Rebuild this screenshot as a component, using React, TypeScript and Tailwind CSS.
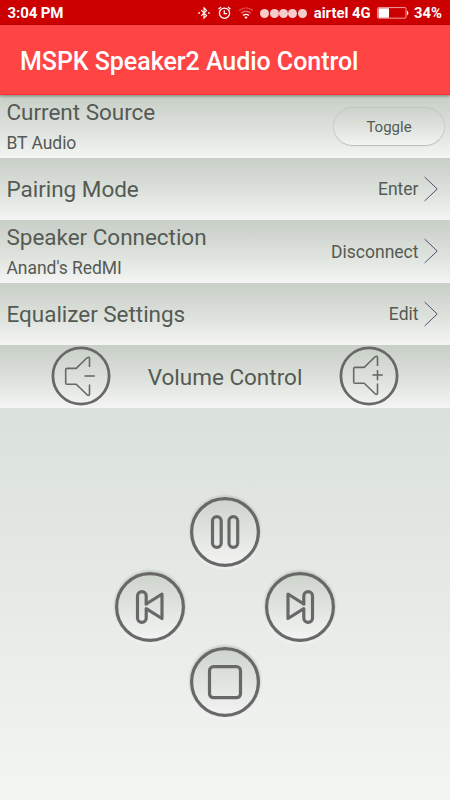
import type { ReactNode } from "react";

interface SettingRowProps {
  title: string;
  subtitle?: string;
  children: ReactNode;
}

const ROW =
  "h-[62.5px] bg-linear-to-b from-[#c8cfc7] via-[#dbe0da] to-[#f4f5f4]";

function SettingRow({ title, subtitle, children }: SettingRowProps) {
  return (
    <div className={`${ROW} flex items-center justify-between pl-[6.5px]`}>
      <div className="flex flex-col gap-[5px] pt-[2px] whitespace-nowrap">
        <span className="text-[22.5px] leading-[27px] tracking-[-0.03px]">{title}</span>
        {subtitle && (
          <span className="text-[17.5px] leading-[24px] tracking-[-0.05px]">{subtitle}</span>
        )}
      </div>
      {children}
    </div>
  );
}

function RowLink({ label }: { label: string }) {
  return (
    <button className="flex items-center gap-[5.5px] pr-3 text-[17.5px]">
      <span className="pt-px">{label}</span>
      <svg width="14" height="26" viewBox="0 0 14 26" fill="none">
        <path d="M.6 1l12.6 12L.6 25" stroke="#50516f" strokeWidth="1" />
      </svg>
    </button>
  );
}

function VolumeIcon({ plus }: { plus?: boolean }) {
  return (
    <svg width="60" height="60" viewBox="0 0 60 60" fill="none" stroke="#686868">
      <circle cx="30" cy="30" r="28.1" strokeWidth="2.8" />
      <g
        strokeWidth="1.6"
        strokeLinejoin="round"
        transform={plus ? "translate(0 -1)" : undefined}
      >
        <path d="M38.5 21v-8.2q0-2.6-2.4-1L25.2 22.4H16q-1.3 0-1.3 1.3v13.2q0 1.3 1.3 1.3h9.2l10.9 10.6q2.4 1.6 2.4-1v-9.4" />
        <path d="M33.5 30h10.3" />
        {plus && <path d="M38.5 25v10.3" />}
      </g>
    </svg>
  );
}

function MediaButton({ label, children }: { label: string; children: ReactNode }) {
  return (
    <button
      aria-label={label}
      className="size-[70px] rounded-full bg-linear-to-b from-[#ccd3cb] to-[#f4f5f4] shadow-[0_-1px_2px_1px_#c8d0c7,0_1px_2px_1px_#f5f6f5]"
    >
      <svg
        width="70"
        height="70"
        viewBox="0 0 70 70"
        fill="none"
        stroke="#686868"
        strokeWidth="3.2"
        strokeLinejoin="round"
      >
        <circle cx="35" cy="35" r="33.4" />
        {children}
      </svg>
    </button>
  );
}

function StatusBar() {
  return (
    <div className="flex h-[25px] items-center bg-[#cc0000] pt-px pr-[8px] pl-[7.5px] text-[14.8px] font-bold text-white">
      <span className="text-[15px] tracking-[-0.1px]">3:04 PM</span>
      <div className="ml-auto flex items-center">
        <svg width="12" height="14" viewBox="0 0 12 14" fill="none" stroke="#fff" strokeWidth="1.1">
          <path d="M3.2 4.2l5.4 5.3L6 12.2V1.8l2.6 2.7-5.4 5.3" />
          <path d="M.3 7h1.6M10.1 7h1.6" strokeWidth="1.5" />
        </svg>
        <svg className="ml-2" width="13" height="14" viewBox="0 0 13 14" fill="none" stroke="#fff" strokeWidth="1.3">
          <circle cx="6.5" cy="7.2" r="5.1" />
          <path d="M6.3 4.3v3.4h2.8M.6 3.2L3 1.1M12.4 3.2L10 1.1" />
        </svg>
        <svg className="ml-[7px]" width="16" height="14" viewBox="0 0 16 14" fill="none" strokeWidth="1.4">
          <path d="M1 4.6q7-5.4 14 0" stroke="#dd4444" />
          <path d="M3.2 7.2q4.8-3.8 9.6 0" stroke="#e36c6c" />
          <path d="M5 9.5q3-2.3 6 0" stroke="#fff" />
          <path d="M6.3 11q1.7-1.2 3.4 0L8 13z" fill="#fff" />
        </svg>
        <div className="ml-[6px] flex gap-[0.4px]">
          {[0, 1, 2, 3, 4].map((i) => (
            <span key={i} className="size-[9px] rounded-full bg-[#f7cccc]" />
          ))}
        </div>
        <span className="ml-[7px] whitespace-nowrap">airtel 4G</span>
        <svg className="ml-[6.5px]" width="32" height="12" viewBox="0 0 32 12">
          <rect x=".6" y=".6" width="28.4" height="10.6" rx="1" fill="none" stroke="#f0a0a0" />
          <path d="M1.5 1.3H12v9.4H1.5z" fill="#fff" />
          <path d="M30 3.5q2.8 2.5 0 5z" fill="#fff" />
        </svg>
        <span className="ml-[5px]">34%</span>
      </div>
    </div>
  );
}

export default function App() {
  return (
    <div className="flex h-[800px] w-[450px] flex-col overflow-hidden bg-linear-to-b from-[#c8cfc7] via-[#dae0da] to-[#f3f5f3] font-['Roboto',sans-serif] text-[#555a54]">
      <StatusBar />
      <header className="relative flex h-[70px] items-center border-b border-[#ff3030] bg-[#ff4444] pt-[4px] pl-5 text-[25px] font-medium tracking-[-0.04px] text-white shadow-[0_1px_3px_rgba(0,0,0,0.4)]">
        <h1 className="whitespace-nowrap">MSPK Speaker2 Audio Control</h1>
      </header>

      <SettingRow title="Current Source" subtitle="BT Audio">
        <button className="mr-[6px] h-[37px] w-[110px] rounded-full bg-linear-to-b from-[#ccd2cb] to-[#f1f3f1] pt-[2px] text-[15px] shadow-[0_0_2px_rgba(0,0,0,0.22),0_1px_1px_rgba(0,0,0,0.15)]">
          Toggle
        </button>
      </SettingRow>
      <SettingRow title="Pairing Mode">
        <RowLink label="Enter" />
      </SettingRow>
      <SettingRow title="Speaker Connection" subtitle="Anand's RedMI">
        <RowLink label="Disconnect" />
      </SettingRow>
      <SettingRow title="Equalizer Settings">
        <RowLink label="Edit" />
      </SettingRow>

      <div className={`${ROW} flex items-center justify-between px-[51px]`}>
        <button aria-label="Volume down">
          <VolumeIcon />
        </button>
        <span className="pt-[3px] text-[22.5px]">Volume Control</span>
        <button aria-label="Volume up">
          <VolumeIcon plus />
        </button>
      </div>

      <div className="flex flex-col items-center gap-[5px] pt-[89.8px]">
        <MediaButton label="Pause">
          <rect x="22.5" y="19.7" width="8.7" height="30.7" rx="4.3" />
          <rect x="39" y="19.7" width="8.7" height="30.7" rx="4.3" />
        </MediaButton>
        <div className="flex gap-20">
          <MediaButton label="Previous">
            <path d="M31.2 33.5V24a4.3 4.3 0 0 0-8.7 0v22a4.3 4.3 0 0 0 8.7 0v-9.3L47 46.5V22L31.2 32" />
          </MediaButton>
          <MediaButton label="Next">
            <path d="M38.8 33.5V24a4.3 4.3 0 0 1 8.7 0v22a4.3 4.3 0 0 1-8.7 0v-9.3L23 46.5V22L38.8 32" />
          </MediaButton>
        </div>
        <MediaButton label="Stop">
          <rect x="19.5" y="19.7" width="31" height="31" rx="4" />
        </MediaButton>
      </div>
    </div>
  );
}
